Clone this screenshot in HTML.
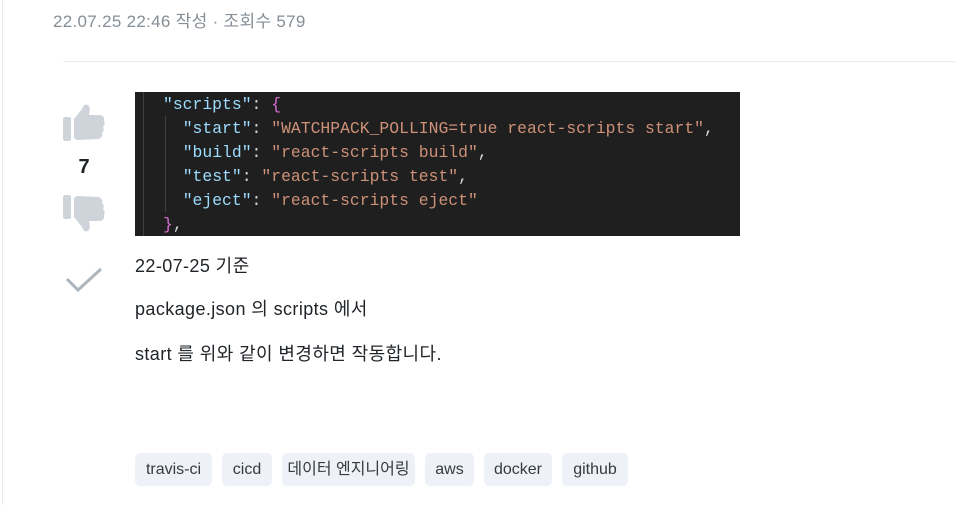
<!DOCTYPE html>
<html><head><meta charset="utf-8"><style>
body{margin:0;width:955px;height:505px;background:#fff;position:relative;overflow:hidden;font-family:"Liberation Sans","Noto Sans CJK KR",sans-serif;}
.lb{position:absolute;left:2px;top:0;width:1px;height:505px;background:#e9ecef}
.meta{position:absolute;left:53px;top:7px;font-size:17px;letter-spacing:0.3px;color:#868e96;}
.hr{position:absolute;left:63px;top:61px;width:892px;height:1px;background:#e9ecef}
.code{position:absolute;left:135px;top:92px;width:605px;height:144px;background:#1f1f1f;font-family:"Liberation Mono",monospace;font-size:16.4px;line-height:24px;}
.code pre{margin:0;position:absolute;left:163px;top:1px;font:inherit;white-space:pre;}
.k{color:#9cdcfe}.s{color:#ce9178}.p{color:#d4d4d4}.b{color:#da70d6}
.g1{position:absolute;left:143px;top:92px;width:1px;height:144px;background:#404040}
.g2{position:absolute;left:165px;top:116px;width:1px;height:96px;background:#404040}
.txt{position:absolute;left:135px;font-size:18px;letter-spacing:0.4px;color:#212529}
.tag{position:absolute;top:453px;height:33px;line-height:33px;background:#eef2f8;border-radius:5px;font-size:16px;color:#343a40;text-align:center}
.num{position:absolute;left:68px;top:156px;width:32px;text-align:center;font-size:20px;font-weight:bold;color:#212529}
</style></head><body>
<div class="lb"></div>
<div class="meta">22.07.25 22:46 작성 · 조회수 579</div>
<div class="hr"></div>
<div class="code"></div>
<div class="g1"></div><div class="g2"></div>
<div class="code" style="background:none"><pre style="left:28px;top:1px"><span class="k">"scripts"</span><span class="p">: </span><span class="b">{</span>
  <span class="k">"start"</span><span class="p">: </span><span class="s">"WATCHPACK_POLLING=true react-scripts start"</span><span class="p">,</span>
  <span class="k">"build"</span><span class="p">: </span><span class="s">"react-scripts build"</span><span class="p">,</span>
  <span class="k">"test"</span><span class="p">: </span><span class="s">"react-scripts test"</span><span class="p">,</span>
  <span class="k">"eject"</span><span class="p">: </span><span class="s">"react-scripts eject"</span>
<span class="b">}</span><span class="p">,</span></pre></div>
<svg style="position:absolute;left:62px;top:103px" width="44" height="40" viewBox="0 0 44 40"><rect x="1" y="14" width="8" height="24" rx="2" fill="#ced4da"/><path d="M12 16 L20 6 Q22 0 26 2 Q29 4 27 12 L38 12 Q43 13 42 18 Q44 21 41 24 Q43 27 40 30 Q41 34 37 36 L16 37 Q12 37 12 33 Z" fill="#ced4da"/></svg>
<div class="num">7</div>
<svg style="position:absolute;left:62px;top:193px" width="44" height="40" viewBox="0 0 44 40"><g transform="translate(0,40) scale(1,-1)"><rect x="1" y="14" width="8" height="24" rx="2" fill="#ced4da"/><path d="M12 16 L20 6 Q22 0 26 2 Q29 4 27 12 L38 12 Q43 13 42 18 Q44 21 41 24 Q43 27 40 30 Q41 34 37 36 L16 37 Q12 37 12 33 Z" fill="#ced4da"/></g></svg>
<svg style="position:absolute;left:64px;top:266px" width="40" height="28" viewBox="0 0 40 28"><path d="M3 13 L14 24 L37 3" fill="none" stroke="#adb5bd" stroke-width="3"/></svg>
<div class="txt" style="top:252px">22-07-25 기준</div>
<div class="txt" style="top:295px">package.json 의 scripts 에서</div>
<div class="txt" style="top:340px">start 를 위와 같이 변경하면 작동합니다.</div>
<div class="tag" style="left:135px;width:77px">travis-ci</div>
<div class="tag" style="left:222px;width:50px">cicd</div>
<div class="tag" style="left:282px;width:133px">데이터 엔지니어링</div>
<div class="tag" style="left:425px;width:49px">aws</div>
<div class="tag" style="left:484px;width:68px">docker</div>
<div class="tag" style="left:562px;width:66px">github</div>
</body></html>
